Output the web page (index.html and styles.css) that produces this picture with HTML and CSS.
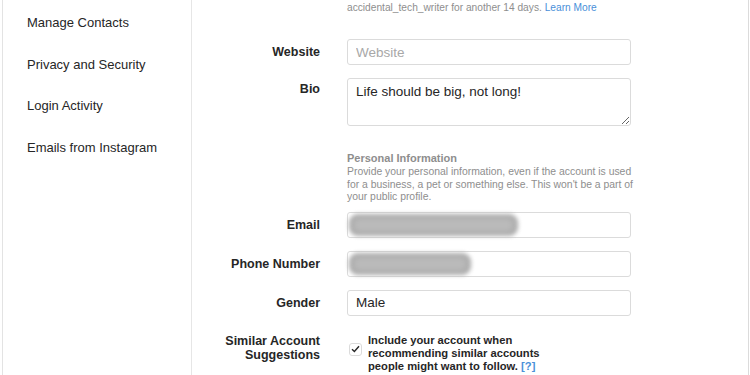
FILE: index.html
```html
<!DOCTYPE html>
<html lang="en">
<head>
    <meta charset="UTF-8">
    <meta name="viewport" content="width=device-width, initial-scale=1.0">
    <title>Edit Profile</title>
    <link rel="stylesheet" href="styles.css">
</head>
<body>
    <div class="page">
        <nav class="sidebar">
            <a class="side-item" href="#">Manage Contacts</a>
            <a class="side-item" href="#">Privacy and Security</a>
            <a class="side-item" href="#">Login Activity</a>
            <a class="side-item" href="#">Emails from Instagram</a>
        </nav>

        <main class="content">
            <div class="row hint-row">
                <div></div>
                <p class="hint">In most cases, you'll be able to change your username back to<br>accidental_tech_writer for another 14 days. <a class="link" href="#">Learn More</a></p>
            </div>

            <div class="row">
                <label class="label">Website</label>
                <input class="field" type="text" placeholder="Website">
            </div>

            <div class="row">
                <label class="label label-top">Bio</label>
                <textarea class="field field-area">Life should be big, not long!</textarea>
            </div>

            <div class="row info-row">
                <div></div>
                <div>
                    <h3 class="info-title">Personal Information</h3>
                    <p class="info-text">Provide your personal information, even if the account is used<br>for a business, a pet or something else. This won't be a part of<br>your public profile.</p>
                </div>
            </div>

            <div class="row">
                <label class="label">Email</label>
                <div class="field"><span class="blurred blurred-email"></span></div>
            </div>

            <div class="row">
                <label class="label">Phone Number</label>
                <div class="field"><span class="blurred blurred-phone"></span></div>
            </div>

            <div class="row">
                <label class="label">Gender</label>
                <input class="field" type="text" value="Male">
            </div>

            <div class="row suggest-row">
                <label class="label label-top">Similar Account<br>Suggestions</label>
                <div class="suggest">
                    <span class="check">
                        <svg width="9" height="8" viewBox="0 0 9 8"><path d="M1 4.2 L3.4 6.5 L8 1.2" fill="none" stroke="#262626" stroke-width="1.4"/></svg>
                    </span>
                    <p class="suggest-text">Include your account when<br>recommending similar accounts<br>people might want to follow. <a class="link" href="#">[?]</a></p>
                </div>
            </div>
        </main>
    </div>
</body>
</html>
```

FILE: styles.css
```css
* {
    margin: 0;
    padding: 0;
    box-sizing: border-box;
}

body {
    background: #fff;
    font-family: 'Liberation Sans', Arial, sans-serif;
    color: #262626;
    overflow: hidden;
    height: 375px;
}

.page {
    display: flex;
    margin-left: 2px;
    width: 747px;
    height: 375px;
    border-left: 1px solid #e3e3e3;
    border-right: 1px solid #dbdbdb;
}

.sidebar {
    width: 189px;
    border-right: 1px solid #e6e6e6;
    padding-top: 2px;
    display: flex;
    flex-direction: column;
}

.side-item {
    display: block;
    height: 41.6px;
    line-height: 41.6px;
    padding-left: 24px;
    font-size: 13px;
    color: #262626;
    text-decoration: none;
}

.content {
    flex: 1;
}

.row {
    display: grid;
    grid-template-columns: 128px 284px;
    column-gap: 27px;
    margin-bottom: 13px;
    align-items: center;
}

.hint-row {
    margin-top: -11px;
    margin-bottom: 25px;
}

.hint {
    font-size: 10.2px;
    line-height: 12.5px;
    color: #8e8e8e;
    white-space: nowrap;
}

.link {
    color: #4a90d9;
    text-decoration: none;
}

.label {
    text-align: right;
    font-size: 12.5px;
    font-weight: bold;
    color: #262626;
    line-height: 14px;
}

.label-top {
    align-self: start;
    padding-top: 4px;
}

.field {
    display: block;
    width: 284px;
    height: 26px;
    border: 1px solid #dbdbdb;
    border-radius: 3px;
    background: #fff;
    padding: 0 8px;
    font-family: 'Liberation Sans', Arial, sans-serif;
    font-size: 13.5px;
    color: #262626;
    outline: none;
}

.field::placeholder {
    color: #a8a8a8;
}

.field-area {
    height: 48px;
    padding: 4px 8px;
    line-height: 17px;
    resize: vertical;
}

div.field {
    padding: 1px 0 0 1px;
}

.blurred {
    display: inline-block;
    height: 22px;
    border-radius: 9px;
    background: #bcbcbc;
    filter: blur(2px);
    box-shadow: inset 0 0 6px 4px #a9a9a9;
}

.blurred-email {
    width: 169px;
}

.blurred-phone {
    width: 122px;
}

.info-row {
    margin-top: 25px;
    margin-bottom: 8px;
    align-items: start;
}

.info-title {
    font-size: 11px;
    font-weight: bold;
    color: #8e8e8e;
    line-height: 14px;
}

.info-text {
    font-size: 10.4px;
    line-height: 12.5px;
    color: #8e8e8e;
    margin-top: 1px;
    white-space: nowrap;
}

.suggest-row {
    margin-top: 18px;
    align-items: start;
}

.suggest-row .label-top {
    padding-top: 0;
}

.suggest {
    display: flex;
    align-items: flex-start;
    gap: 6px;
    padding-left: 2px;
}

.check {
    width: 13px;
    height: 13px;
    margin-top: 9px;
    border: 1px solid #dbdbdb;
    border-radius: 3px;
    background: #fff;
    display: flex;
    align-items: center;
    justify-content: center;
    flex-shrink: 0;
}

.suggest-text {
    font-size: 11.2px;
    font-weight: bold;
    line-height: 13px;
    color: #262626;
    white-space: nowrap;
}
```
